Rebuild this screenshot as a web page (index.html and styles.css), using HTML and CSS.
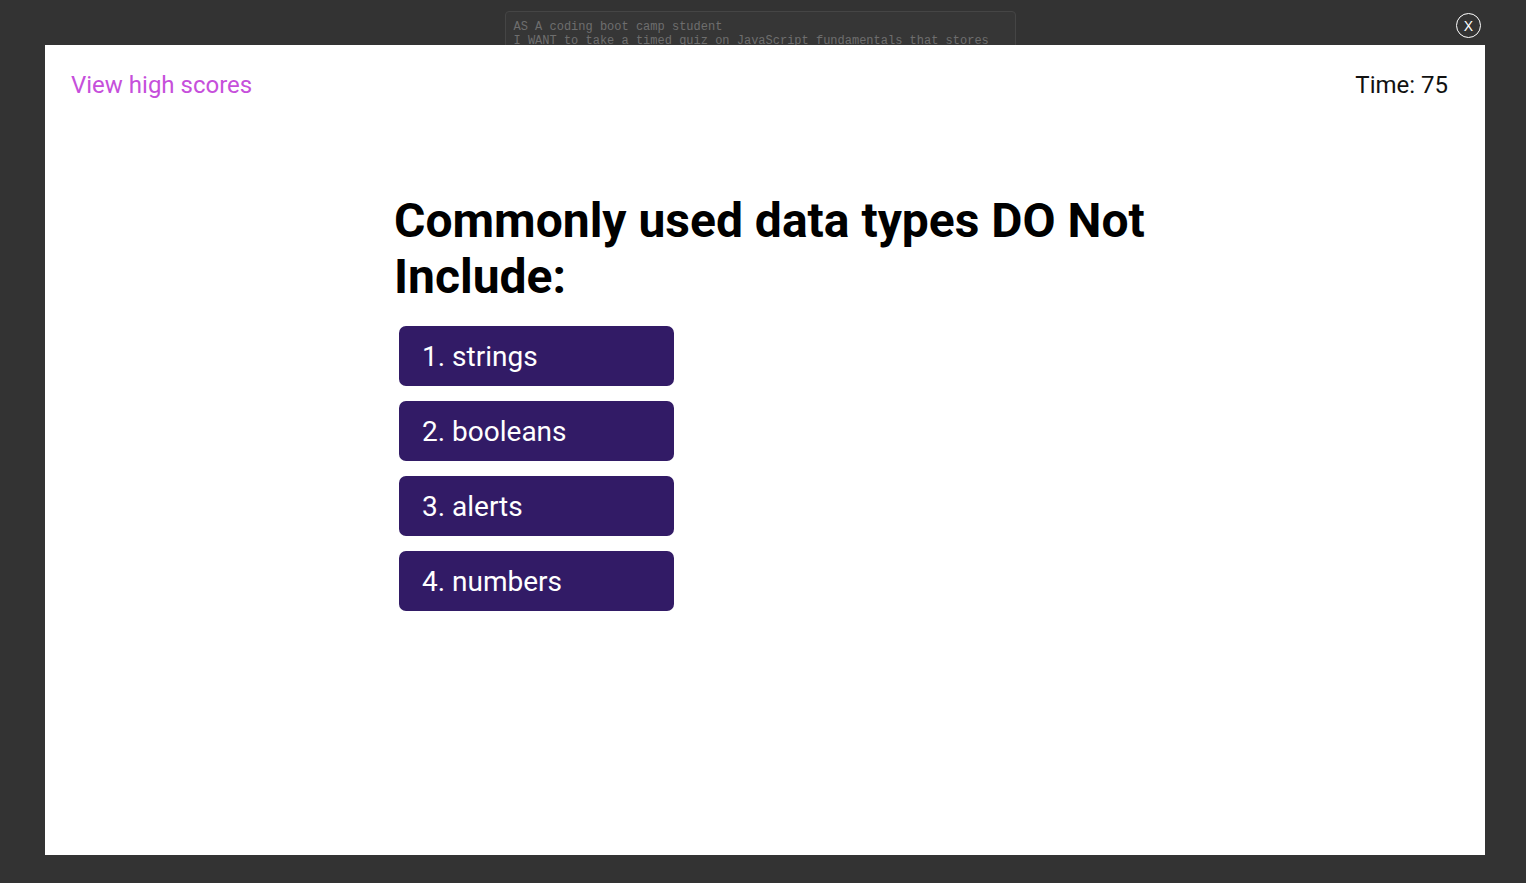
FILE: index.html
```html
<!DOCTYPE html>
<html>
<head>
<meta charset="utf-8">
<link rel="stylesheet" href="styles.css">
</head>
<body>
<div class="backdrop">
  <pre class="story">AS A coding boot camp student
I WANT to take a timed quiz on JavaScript fundamentals that stores
my high scores</pre>
</div>
<button class="close" aria-label="Close">X</button>
<div class="lightbox">
  <header class="topbar">
    <a class="scores" href="#">View high scores</a>
    <span class="timer">Time: 75</span>
  </header>
  <main class="quiz">
    <h1 class="question">Commonly used data types DO Not Include:</h1>
    <div class="answers">
      <button class="answer">1. strings</button>
      <button class="answer">2. booleans</button>
      <button class="answer">3. alerts</button>
      <button class="answer">4. numbers</button>
    </div>
  </main>
</div>
</body>
</html>
```
FILE: styles.css
```css
html, body {
  margin: 0;
  padding: 0;
  height: 100%;
}
body {
  background: #333333;
  font-family: Roboto, "Liberation Sans", sans-serif;
  overflow: hidden;
}
.backdrop {
  display: flex;
  justify-content: center;
  padding-top: 11px;
  padding-right: 6px;
}
.story {
  margin: 0;
  width: 493px;
  height: 120px;
  padding: 9px 8px 7px;
  border: 1px solid #454545;
  border-radius: 4px;
  background: #363636;
  color: #6e6e6e;
  font-family: "Liberation Mono", monospace;
  font-size: 12px;
  line-height: 13.5px;
  overflow: hidden;
}
.close {
  position: absolute;
  top: 13px;
  left: 1456px;
  width: 25px;
  height: 25px;
  border: 1.5px solid #ffffff;
  border-radius: 50%;
  background: transparent;
  color: #ffffff;
  font-family: "Liberation Sans", sans-serif;
  font-size: 14px;
  line-height: 20px;
  padding: 0;
  text-align: center;
}
.lightbox {
  position: absolute;
  top: 45px;
  left: 45px;
  width: 1440px;
  height: 810px;
  background: #ffffff;
  box-sizing: border-box;
}
.topbar {
  display: flex;
  justify-content: space-between;
  align-items: center;
  padding: 26px 37px 0 26px;
}
.scores {
  color: #c64fdb;
  text-decoration: none;
  font-size: 24px;
}
.timer {
  color: #111111;
  font-size: 24px;
}
.quiz {
  padding: 0 0 0 349px;
}
.question {
  margin: 94px 0 0;
  width: 800px;
  font-size: 48px;
  font-weight: 700;
  line-height: 56px;
  color: #000000;
}
.answers {
  display: flex;
  flex-direction: column;
  gap: 15px;
  margin: 21px 0 0 5px;
}
.answer {
  width: 275px;
  height: 60px;
  border: none;
  border-radius: 7px;
  background: #321b66;
  color: #ffffff;
  font-family: Roboto, "Liberation Sans", sans-serif;
  font-size: 28px;
  text-align: left;
  padding: 0 0 0 23px;
}
```
